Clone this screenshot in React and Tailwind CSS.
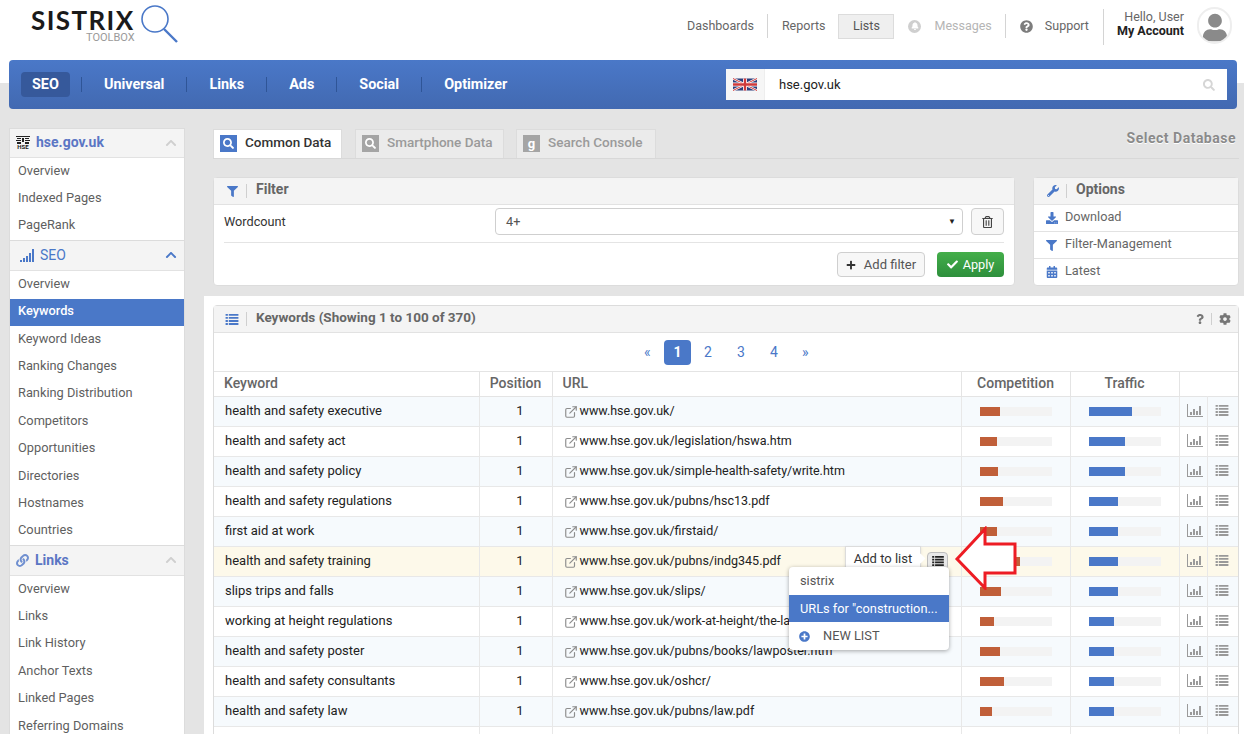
import { ExternalLink } from 'lucide-react';
import {
  FaBell,
  FaCalendarAlt,
  FaCheck,
  FaChevronUp,
  FaCog,
  FaDownload,
  FaFilter,
  FaLink,
  FaPlus,
  FaPlusCircle,
  FaQuestion,
  FaQuestionCircle,
  FaRegTrashAlt,
  FaSearch,
  FaUser,
  FaWrench,
} from 'react-icons/fa';

const groups = [
  { title: 'hse.gov.uk', icon: 'hse', items: ['Overview', 'Indexed Pages', 'PageRank'] },
  {
    title: 'SEO',
    icon: 'signal',
    open: true,
    items: ['Overview', 'Keywords', 'Keyword Ideas', 'Ranking Changes', 'Ranking Distribution', 'Competitors', 'Opportunities', 'Directories', 'Hostnames', 'Countries'],
  },
  { title: 'Links', icon: 'link', items: ['Overview', 'Links', 'Link History', 'Anchor Texts', 'Linked Pages', 'Referring Domains'] },
];

const rows = [
  ['health and safety executive', 'www.hse.gov.uk/', 20, 43],
  ['health and safety act', 'www.hse.gov.uk/legislation/hswa.htm', 17, 36],
  ['health and safety policy', 'www.hse.gov.uk/simple-health-safety/write.htm', 18, 36],
  ['health and safety regulations', 'www.hse.gov.uk/pubns/hsc13.pdf', 23, 29],
  ['first aid at work', 'www.hse.gov.uk/firstaid/', 17, 29],
  ['health and safety training', 'www.hse.gov.uk/pubns/indg345.pdf', 40, 29],
  ['slips trips and falls', 'www.hse.gov.uk/slips/', 21, 29],
  ['working at height regulations', 'www.hse.gov.uk/work-at-height/the-law.htm', 14, 25],
  ['health and safety poster', 'www.hse.gov.uk/pubns/books/lawposter.htm', 20, 25],
  ['health and safety consultants', 'www.hse.gov.uk/oshcr/', 24, 25],
  ['health and safety law', 'www.hse.gov.uk/pubns/law.pdf', 12, 25],
  ['', '', 0, 0],
];

function ListIcon({ className }) {
  return (
    <svg viewBox="0 0 14 12" className={className} fill="currentColor">
      <path d="M0 0h2.5v2H0zM3.5 0H14v2H3.5zM0 3.3h2.5v2H0zM3.5 3.3H14v2H3.5zM0 6.6h2.5v2H0zM3.5 6.6H14v2H3.5zM0 9.9h2.5V12H0zM3.5 9.9H14V12H3.5z" />
    </svg>
  );
}

function ChartIcon() {
  return (
    <svg viewBox="0 0 16 13" className="mb-[2px] h-[13px] w-[16px] text-[#9a9a9a]" fill="currentColor">
      <path d="M0 0h1v12h15v1H0zM3 8h2v3H3zM6 5h2v6H6zM9 7h2v4H9zM12 2h2v9h-2z" />
    </svg>
  );
}

function GroupIcon({ type }) {
  if (type === 'hse') {
    return (
      <div className="flex w-[14px] flex-col items-center text-[#222]">
        <svg viewBox="0 0 14 8" className="h-[8px] w-[14px]" fill="currentColor">
          <path d="M0 0h14v1H0zM1 2h4v1H1zM9 2h4v1H9zM0 4h5v1H0zM6 2h2v4H6zM9 4h5v1H9zM1 6h4v2H1zM9 6h4v2H9z" />
        </svg>
        <span className="text-[6px] font-bold leading-[6px]">HSE</span>
      </div>
    );
  }
  if (type === 'signal') {
    return (
      <svg viewBox="0 0 14 13" className="ml-[4px] h-[13px] w-[14px] text-[#4a78c8]" fill="currentColor">
        <path d="M0 11h2v2H0zM3 9h2v4H3zM6 7h2v6H6zM9 4h2v9H9zM12 0h2v13h-2z" />
      </svg>
    );
  }
  return <FaLink className="h-[13px] w-[13px] text-[#6f8fd0]" />;
}

function SidebarGroup({ group, first }) {
  return (
    <div className="border-b border-[#dcdcdc]">
      <div className={`flex items-center border-b border-[#e2e2e2] bg-[#f4f4f4] pb-[1px] pl-[6px] pr-[7px] ${first ? 'h-[29px]' : 'h-[30px]'}`}>
        <GroupIcon type={group.icon} />
        <span className={`ml-[6px] flex-1 text-[14px] ${group.open ? 'font-normal text-[#4a78c8]' : 'font-bold text-[#5b76c4]'}`}>
          {group.title}
        </span>
        <FaChevronUp className={`h-[12px] w-[12px] ${group.open ? 'text-[#4a78c8]' : 'text-[#cfcfcf]'}`} />
      </div>
      <div className="bg-white">
        {group.items.map((item, i) => {
          const active = group.open && item === 'Keywords';
          return (
            <div
              key={i}
              className={`flex h-[27.4px] items-center pb-[3px] pl-[8px] text-[12.8px] ${active ? 'bg-[#4a78c8] font-medium text-white' : 'text-[#5f5f5f]'}`}
            >
              {item}
            </div>
          );
        })}
      </div>
    </div>
  );
}

function Tab({ color, icon, label, active, width }) {
  return (
    <div
      className={`flex h-[29px] items-center border border-b-0 border-[#dcdcdc] pl-[6px] text-[13.5px] ${width} ${active ? 'bg-white text-[#333]' : 'bg-[#ebebeb] text-[#9a9a9a]'}`}
    >
      <div className={`flex h-[17px] w-[17px] items-center justify-center text-white ${color}`}>{icon}</div>
      <span className="mb-[3px] ml-[8px] font-medium">{label}</span>
    </div>
  );
}

function PanelHeader({ icon, children }) {
  return (
    <div className="flex h-[27px] items-center border-b border-[#e2e2e2] bg-[#f4f4f4] pl-[12px]">
      <div className="flex w-[13px] justify-center text-[#4a78c8]">{icon}</div>
      <div className="ml-[7px] h-[14px] w-px bg-[#cfcfcf]" />
      <span className="mb-[3px] ml-[9px] text-[14px] font-bold text-[#666]">{children}</span>
    </div>
  );
}

function OptionRow({ icon, label, last }) {
  return (
    <div className={`flex h-[27px] items-center pl-[11px] text-[12.7px] text-[#666] ${last ? 'pb-[2px]' : 'border-b border-[#e2e2e2]'}`}>
      <div className="flex w-[13px] justify-center text-[#4a78c8]">{icon}</div>
      <span className="mb-[2px] ml-[7px]">{label}</span>
    </div>
  );
}

function Bar({ value, color }) {
  return (
    <div className="h-[9px] w-[72px] bg-[#f3f3f3]">
      <div className={`h-full ${color}`} style={{ width: value }} />
    </div>
  );
}

export default function App() {
  return (
    <div className="relative h-[734px] w-[1244px] overflow-hidden bg-[#e4e4e4] font-['Roboto',sans-serif] text-[14px] text-[#222]">
      {/* top bar */}
      <header className="flex h-[60px] items-start justify-between bg-white pl-[31px] pr-[12px]">
        <div className="relative mt-[4px] h-[40px] w-[150px]">
          <div className="pt-[4px] font-['Lato',sans-serif] text-[26px] font-bold leading-[24px] tracking-[1.4px] text-[#1a1a1a]">SISTRIX</div>
          <div className="absolute left-[55px] top-[28px] text-[11px] leading-[11px] text-[#9a9a9a]">TOOLBOX</div>
          <svg viewBox="0 0 40 42" className="absolute left-[109px] top-0 h-[42px] w-[40px]" fill="none" stroke="#4a78c8">
            <circle cx="15" cy="15" r="13" strokeWidth="1.6" />
            <path d="M24 25l13 13" strokeWidth="2.4" />
          </svg>
        </div>
        <div className="flex h-[52px] items-center text-[12.5px] text-[#666]">
          <span>Dashboards</span>
          <div className="ml-[13px] h-[24px] w-px bg-[#d4d4d4]" />
          <span className="ml-[14px]">Reports</span>
          <div className="ml-[13px] flex h-[25px] w-[56px] items-center justify-center border border-[#dcdcdc] bg-[#efefef] text-[#555]">Lists</div>
          <div className="ml-[14px] flex h-[13px] w-[13px] items-center justify-center rounded-full bg-[#cfcfcf] text-white">
            <FaBell className="h-[8px] w-[8px]" />
          </div>
          <span className="ml-[13px] text-[#b5b5b5]">Messages</span>
          <div className="ml-[13px] h-[24px] w-px bg-[#d4d4d4]" />
          <FaQuestionCircle className="ml-[14px] h-[13px] w-[13px] text-[#7d7d7d]" />
          <span className="ml-[12px]">Support</span>
          <div className="ml-[14px] mt-[9px] h-[36px] w-px self-start bg-[#d4d4d4]" />
          <div className="ml-[13px] mt-[10px] flex flex-col items-end self-start leading-[14px]">
            <span className="text-[#666]">Hello, User</span>
            <span className="font-bold text-[#222]">My Account</span>
          </div>
          <div className="ml-[13px] mt-[7px] flex h-[37px] w-[35px] items-end justify-center self-start overflow-hidden rounded-full border-2 border-[#eeeeee] bg-white text-[#8a8a8a]">
            <FaUser className="h-[29px] w-[24px]" />
          </div>
        </div>
      </header>

      {/* main nav */}
      <div className="bg-[linear-gradient(#fff_23px,#e4e4e4_23px)] pb-[19px] pl-[9px] pr-[7px]">
        <nav className="flex h-[49px] items-center justify-between rounded-sm bg-[linear-gradient(#4a78c8,#4269b1)] pl-[12px] pr-[10px]">
          <div className="flex items-center text-[14.4px] font-bold text-white">
            <div className="flex h-[25px] items-center rounded-sm bg-[#36599b] px-[11px]">SEO</div>
            <div className="ml-[11px] h-[15px] w-px bg-[#2f5597]" />
            <span className="mx-[22px]">Universal</span>
            <div className="h-[15px] w-px bg-[#2f5597]" />
            <span className="mx-[22px]">Links</span>
            <div className="h-[15px] w-px bg-[#2f5597]" />
            <span className="mx-[22px]">Ads</span>
            <div className="h-[15px] w-px bg-[#2f5597]" />
            <span className="mx-[22px]">Social</span>
            <div className="h-[15px] w-px bg-[#2f5597]" />
            <span className="ml-[22px]">Optimizer</span>
          </div>
          <div className="flex h-[31px] w-[501px] items-center bg-white">
            <div className="flex h-full w-[39px] items-center justify-center border-r border-[#eeeeee] bg-[#f6f6f6]">
              <svg viewBox="0 0 60 30" className="h-[15px] w-[24px]">
                <rect width="60" height="30" fill="#2c3f7c" />
                <path d="M0 0l60 30M60 0L0 30" stroke="#fff" strokeWidth="6" />
                <path d="M0 0l60 30M60 0L0 30" stroke="#cf3a3a" strokeWidth="2.5" />
                <path d="M30 0v30M0 15h60" stroke="#fff" strokeWidth="10" />
                <path d="M30 0v30M0 15h60" stroke="#cf3a3a" strokeWidth="6" />
              </svg>
            </div>
            <span className="ml-[14px] flex-1 text-[13px] text-[#222]">hse.gov.uk</span>
            <FaSearch className="mr-[12px] h-[12px] w-[12px] text-[#d6d6d6]" />
          </div>
        </nav>
      </div>

      <div className="flex">
        <aside className="ml-[9px] w-[176px] shrink-0 self-start border-x border-t border-[#dcdcdc]">
          {groups.map((group, i) => (
            <SidebarGroup key={i} group={group} first={i === 0} />
          ))}
        </aside>

        <main className="ml-[19px] flex-1">
          <div className="pl-[9px] pr-[5px]">
            <div className="flex items-center border-b border-[#d8d8d8] pr-[3px]">
              <Tab active width="w-[129px]" label="Common Data" color="bg-[#4a78c8]" icon={<FaSearch className="h-[11px] w-[11px]" />} />
              <div className="ml-[13px]">
                <Tab width="w-[149px]" label="Smartphone Data" color="bg-[#a5a5a5]" icon={<FaSearch className="h-[11px] w-[11px]" />} />
              </div>
              <div className="ml-[12px]">
                <Tab width="w-[140px]" label="Search Console" color="bg-[#a5a5a5]" icon={<span className="text-[13px] font-bold leading-none">g</span>} />
              </div>
              <span className="mb-[9px] ml-auto text-[14px] font-bold tracking-[0.5px] text-[#8a8a8a] [text-shadow:0_1px_0_#fff]">Select Database</span>
            </div>

            <div className="mt-[18px] flex h-[109px] justify-between">
              <section className="w-[802px] rounded-sm border border-[#dcdcdc] bg-white">
                <PanelHeader icon={<FaFilter className="h-[11px] w-[11px]" />}>Filter</PanelHeader>
                <div className="mx-[10px] flex h-[38px] items-start border-b border-[#e4e4e4] pt-[3px] text-[12.7px]">
                  <span className="mt-[4px] w-[271px] text-[#333]">Wordcount</span>
                  <div className="flex h-[27px] w-[468px] items-center justify-between rounded-sm border border-[#cfcfcf] px-[10px] text-[#555]">
                    <span>4+</span>
                    <span className="mr-[-4px] text-[8px] text-[#222]">▼</span>
                  </div>
                  <div className="ml-[8px] flex h-[27px] w-[33px] items-center justify-center rounded-sm border border-[#cfcfcf] bg-[#f7f7f7] text-[#444]">
                    <FaRegTrashAlt className="h-[12px] w-[11px]" />
                  </div>
                </div>
                <div className="mx-[10px] mt-[9px] flex justify-end text-[13px]">
                  <div className="flex h-[25px] w-[88px] items-center justify-center rounded-sm border border-[#cfcfcf] bg-[#f7f7f7] text-[#555]">
                    <FaPlus className="mr-[8px] h-[10px] w-[10px] text-[#333]" />
                    Add filter
                  </div>
                  <div className="ml-[12px] flex h-[25px] w-[67px] items-center justify-center rounded-sm bg-[linear-gradient(#44ae4a,#2d8f3c)] text-[12.7px] text-white">
                    <FaCheck className="mr-[5px] h-[11px] w-[11px]" />
                    Apply
                  </div>
                </div>
              </section>

              <section className="w-[206px] rounded-sm border border-[#dcdcdc] bg-white">
                <PanelHeader icon={<FaWrench className="h-[12px] w-[12px]" />}>Options</PanelHeader>
                <OptionRow icon={<FaDownload className="h-[12px] w-[12px]" />} label="Download" />
                <OptionRow icon={<FaFilter className="h-[11px] w-[11px]" />} label="Filter-Management" />
                <OptionRow last icon={<FaCalendarAlt className="h-[12px] w-[12px]" />} label="Latest" />
              </section>
            </div>
          </div>

          <div className="mt-[10px] bg-white pb-[20px] pl-[9px] pr-[5px] pt-[9px]">
            <section className="rounded-sm border border-[#dcdcdc]">
              <div className="flex h-[27px] items-center border-b border-[#e2e2e2] bg-[#f4f4f4] pl-[11px] pr-[7px]">
                <ListIcon className="h-[11px] w-[14px] text-[#4a78c8]" />
                <div className="ml-[7px] h-[14px] w-px bg-[#cfcfcf]" />
                <span className="mb-[3px] ml-[9px] flex-1 text-[13.5px] font-bold text-[#666]">Keywords (Showing 1 to 100 of 370)</span>
                <FaQuestion className="h-[10px] w-[8px] text-[#777]" />
                <div className="mx-[7px] h-[12px] w-px bg-[#cfcfcf]" />
                <FaCog className="h-[12px] w-[12px] text-[#777]" />
              </div>
              <div className="flex h-[38px] items-center bg-white pl-[430px] text-[#4a78c8]">
                <span className="w-[20px]">«</span>
                <span className="flex h-[25px] w-[27px] items-center justify-center rounded-sm bg-[#4a78c8] font-bold text-white">1</span>
                <span className="ml-[13px] w-[33px]">2</span>
                <span className="w-[33px]">3</span>
                <span className="w-[32px]">4</span>
                <span>»</span>
              </div>
              <table className="w-full table-fixed border-collapse">
                <colgroup>
                  <col className="w-[265px]" />
                  <col className="w-[73px]" />
                  <col className="w-[409px]" />
                  <col className="w-[109px]" />
                  <col className="w-[109px]" />
                  <col className="w-[28px]" />
                  <col />
                </colgroup>
                <thead>
                  <tr className="h-[25px] border-y border-[#e4e4e4] text-[#666]">
                    <th className="border-r border-[#e4e4e4] pb-[1px] pl-[10px] text-left font-medium">Keyword</th>
                    <th className="border-r border-[#e4e4e4] pb-[1px] font-medium">Position</th>
                    <th className="border-r border-[#e4e4e4] pb-[1px] pl-[10px] text-left font-medium">URL</th>
                    <th className="border-r border-[#e4e4e4] pb-[1px] font-medium">Competition</th>
                    <th className="border-r border-[#e4e4e4] pb-[1px] font-medium">Traffic</th>
                    <th colSpan={2} />
                  </tr>
                </thead>
                <tbody>
                  {rows.map((row, i) => (
                    <tr
                      key={i}
                      className={`h-[30px] border-b border-[#e8e8e8] text-[#222] ${i === 5 ? 'bg-[#fdf9ea]' : i % 2 === 0 ? 'bg-[#f6fafd]' : 'bg-white'}`}
                    >
                      <td className="border-r border-[#e8e8e8] pb-[1px] pl-[11px] text-[13px]">{row[0]}</td>
                      <td className="border-r border-[#e8e8e8] pb-[1px] pl-[9px] text-center text-[13px]">{row[0] && 1}</td>
                      <td className="border-r border-[#e8e8e8] pl-[11px] text-[12.5px]">
                        {row[0] && (
                          <div className="flex items-center whitespace-nowrap">
                            <ExternalLink className="mr-[2px] h-[14px] w-[14px] text-[#8d8d8d]" />
                            <span className="mb-[1px]">{row[1]}</span>
                          </div>
                        )}
                      </td>
                      <td className="border-r border-[#e8e8e8] pl-[18px]">{row[0] && <Bar value={row[2]} color="bg-[#c05f39]" />}</td>
                      <td className="border-r border-[#e8e8e8] pl-[18px]">{row[0] && <Bar value={row[3]} color="bg-[#4a78c8]" />}</td>
                      <td className="border-r border-[#e8e8e8] pl-[7px]">{row[0] && <ChartIcon />}</td>
                      <td className="pb-[2px] pl-[7px]">{row[0] && <ListIcon className="h-[11px] w-[14px] text-[#999]" />}</td>
                    </tr>
                  ))}
                </tbody>
              </table>
            </section>
          </div>
        </main>
      </div>

      {/* add-to-list popover on the hovered row */}
      <div className="absolute left-[845px] top-[546px] flex h-[25px] w-[76px] items-center justify-center border border-[#dcdcdc] bg-white text-[13px] text-[#333] shadow-sm">
        Add to list
        <div className="absolute right-[-4px] top-[8px] h-[7px] w-[7px] rotate-45 bg-white" />
      </div>
      <div className="absolute left-[927px] top-[552px] flex h-[18px] w-[21px] items-center justify-center rounded-sm border border-[#bdbdbd] bg-[#e9e9e9] text-[#222]">
        <ListIcon className="h-[10px] w-[14px]" />
      </div>
      <div className="absolute left-[789px] top-[567px] w-[160px] rounded-sm bg-white text-[12.8px] text-[#555] shadow-[0_1px_4px_rgba(0,0,0,0.35)]">
        <div className="flex h-[28px] items-center pl-[11px]">sistrix</div>
        <div className="flex h-[27px] items-center whitespace-nowrap bg-[#4a78c8] pl-[11px] text-white">URLs for "construction...</div>
        <div className="flex h-[28px] items-center pl-[10px]">
          <FaPlusCircle className="h-[11px] w-[11px] text-[#4a78c8]" />
          <span className="ml-[13px]">NEW LIST</span>
        </div>
      </div>
      <svg viewBox="0 0 70 64" className="absolute left-[953px] top-[526px] h-[64px] w-[70px]">
        <path d="M4 33L32 3v15h30v29H32v15z" fill="#fff" stroke="#ed1c24" strokeWidth="3" />
      </svg>
    </div>
  );
}
